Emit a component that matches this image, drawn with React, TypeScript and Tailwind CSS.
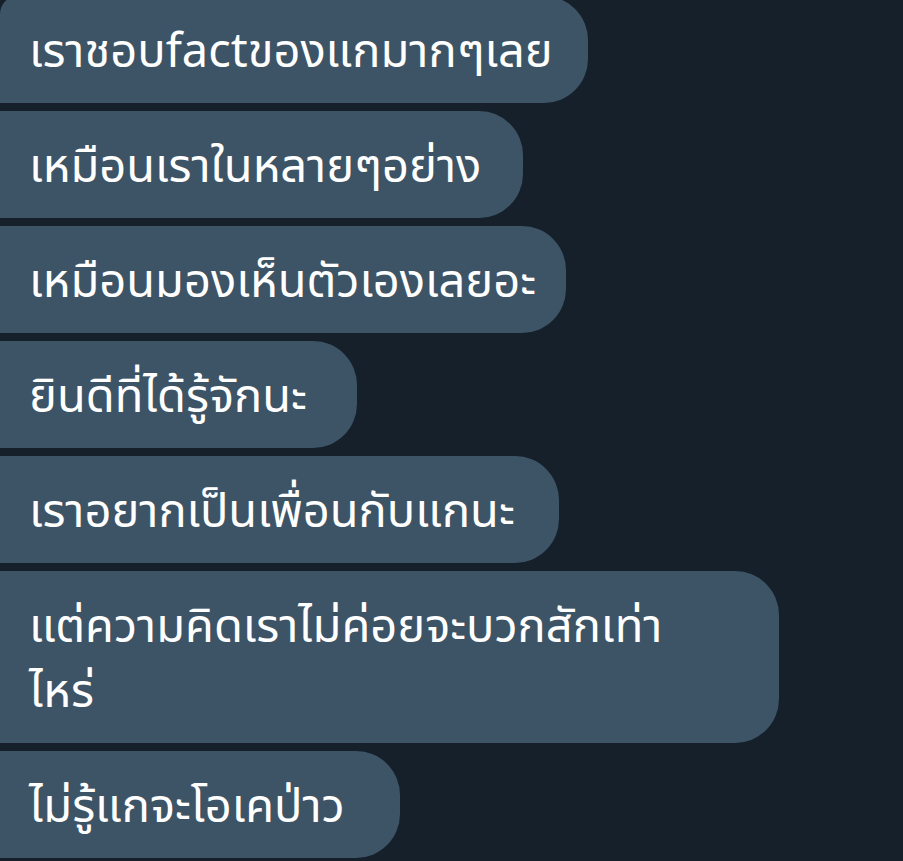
import React from 'react';

const messages = [
  { text: 'เราชอบfactของแกมากๆเลย', width: 'w-[588px]', first: true },
  { text: 'เหมือนเราในหลายๆอย่าง', width: 'w-[523px]' },
  { text: 'เหมือนมองเห็นตัวเองเลยอะ', width: 'w-[566px]' },
  { text: 'ยินดีที่ได้รู้จักนะ', width: 'w-[357px]' },
  { text: 'เราอยากเป็นเพื่อนกับแกนะ', width: 'w-[559px]' },
  { text: 'แต่ความคิดเราไม่ค่อยจะบวกสักเท่า\nไหร่', width: 'w-[779px]' },
  { text: 'ไม่รู้แกจะโอเคป่าว', width: 'w-[400px]' },
];

const App = () => {
  return (
    <div
      className="h-[861px] w-[903px] overflow-hidden bg-[#15202b] text-white"
      style={{ fontFamily: '"Noto Sans Thai", "Noto Sans Thai UI", "Noto Sans", Roboto, sans-serif' }}
    >
      <div className="-mt-1 flex flex-col items-start gap-2">
        {messages.map((m, i) => (
          <div
            key={i}
            className={`${m.width} ${m.first ? 'rounded-tl-[18px]' : ''} whitespace-pre rounded-r-[44px] bg-[#3d5466] pt-[24px] pb-[18px] pl-[29px] text-[47px] leading-[65px]`}
          >
            {m.text}
          </div>
        ))}
      </div>
    </div>
  );
};

export default App;
